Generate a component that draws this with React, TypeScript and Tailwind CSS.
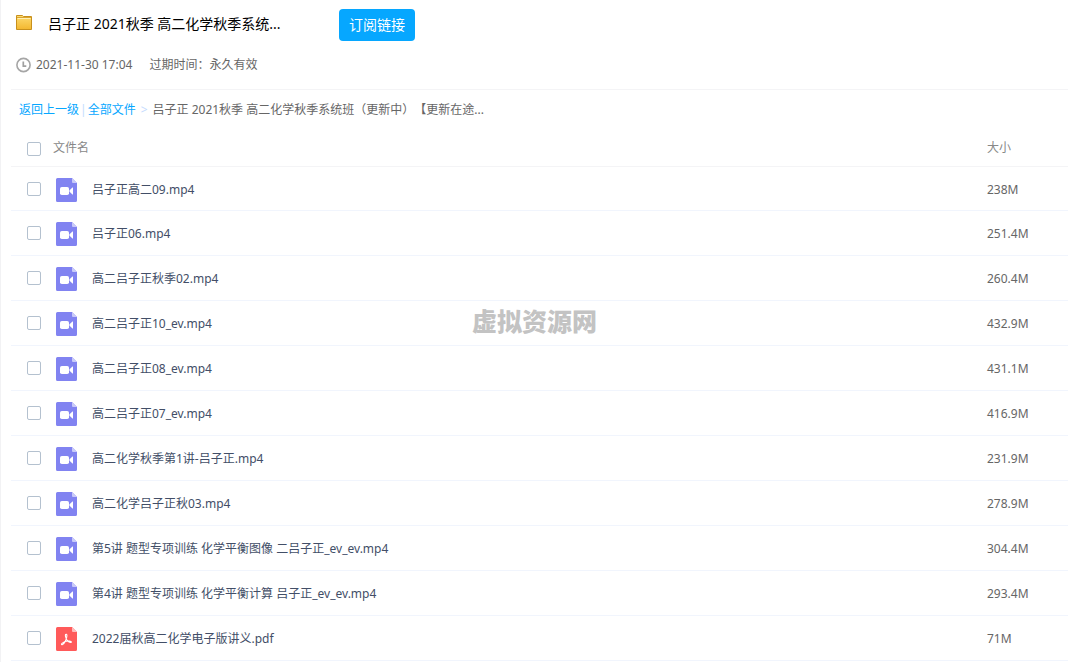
import { useState } from 'react';

type FileKind = 'video' | 'pdf';

interface FileEntry {
  name: string;
  size: string;
  kind: FileKind;
}

const files: FileEntry[] = [
  { name: '吕子正高二09.mp4', size: '238M', kind: 'video' },
  { name: '吕子正06.mp4', size: '251.4M', kind: 'video' },
  { name: '高二吕子正秋季02.mp4', size: '260.4M', kind: 'video' },
  { name: '高二吕子正10_ev.mp4', size: '432.9M', kind: 'video' },
  { name: '高二吕子正08_ev.mp4', size: '431.1M', kind: 'video' },
  { name: '高二吕子正07_ev.mp4', size: '416.9M', kind: 'video' },
  { name: '高二化学秋季第1讲-吕子正.mp4', size: '231.9M', kind: 'video' },
  { name: '高二化学吕子正秋03.mp4', size: '278.9M', kind: 'video' },
  { name: '第5讲 题型专项训练 化学平衡图像 二吕子正_ev_ev.mp4', size: '304.4M', kind: 'video' },
  { name: '第4讲 题型专项训练 化学平衡计算 吕子正_ev_ev.mp4', size: '293.4M', kind: 'video' },
  { name: '2022届秋高二化学电子版讲义.pdf', size: '71M', kind: 'pdf' },
];

function FolderIcon() {
  return (
    <svg width="16" height="15" viewBox="0 0 16 15" aria-hidden="true" className="mb-1 shrink-0">
      <defs>
        <linearGradient id="folder-fill" x1="0" y1="0" x2="0" y2="1">
          <stop offset="0" stopColor="#fddc72" />
          <stop offset="1" stopColor="#f3b72f" />
        </linearGradient>
      </defs>
      <path d="M.5 14.5V.5h6l1 1h8v13z" fill="url(#folder-fill)" stroke="#c8901c" />
      <path d="M1.5 3.5h13" stroke="#fff0b4" />
      <path d="M1 2.5h14" stroke="#dba52e" />
    </svg>
  );
}

function ClockIcon() {
  return (
    <svg width="16" height="16" viewBox="0 0 16 16" fill="none" aria-hidden="true" className="shrink-0">
      <circle cx="7.5" cy="8" r="6.6" stroke="#a6a6a6" strokeWidth="1.6" />
      <path d="M7.3 4.5v4.7h3" stroke="#a0a0a0" strokeWidth="1.7" />
    </svg>
  );
}

function FileIcon({ kind }: { kind: FileKind }) {
  const video = kind === 'video';
  return (
    <svg width="21" height="24" viewBox="0 0 21 24" aria-hidden="true" className="shrink-0">
      <path
        d="M1.5 0H16l5 5v17.5a1.5 1.5 0 0 1-1.5 1.5h-18A1.5 1.5 0 0 1 0 22.5v-21A1.5 1.5 0 0 1 1.5 0z"
        fill={video ? '#8183f1' : '#ff5a5a'}
      />
      <path d="M16 0l5 5h-4a1 1 0 0 1-1-1z" fill={video ? '#c9caf9' : '#ffbcbc'} />
      {video ? (
        <g fill="#fff">
          <rect x="4" y="9" width="9" height="8" rx="1.8" />
          <path d="M13.5 12.2l3-2.7q.5-.4.5.3v6.4q0 .7-.5.3l-3-2.7z" />
        </g>
      ) : (
        <path
          d="M9.6 7.5c1.2-.8 1.6.7 1.1 2.6-.6 2.6-2.5 6.500-4.200 7.500-1 .5-1.500-.4-.5-1.200 1.800-1.600 5-2.500 7.600-2.300 2.300.2 2.200 1.500.9 1.400-2-.2-4.400-2.900-5-6-.2-1-.2-1.700.1-2z"
          fill="none"
          stroke="#fff"
          strokeWidth="1.1"
          strokeLinejoin="round"
        />
      )}
    </svg>
  );
}

interface TickProps {
  label: string;
  checked: boolean;
  onChange: () => void;
}

function Tick({ label, checked, onChange }: TickProps) {
  return (
    <input
      type="checkbox"
      aria-label={label}
      checked={checked}
      onChange={onChange}
      className="block size-[14px] appearance-none rounded-xs border border-[#b4c1cf] bg-white checked:border-[#06a7ff] checked:bg-[#06a7ff]"
    />
  );
}

export default function App() {
  const [selected, setSelected] = useState<string[]>([]);
  const allSelected = selected.length === files.length;

  const toggle = (name: string) =>
    setSelected((current) =>
      current.includes(name) ? current.filter((item) => item !== name) : [...current, name],
    );
  const toggleAll = () => setSelected(allSelected ? [] : files.map((file) => file.name));

  return (
    <main className="relative min-h-screen border-l border-[#f2f2f4] bg-white pl-[10px] font-['Noto_Sans','Noto_Sans_CJK_SC',sans-serif] text-xs text-[#666] [text-spacing-trim:space-all]">
      <header className="border-b border-[#f4f4f6] pt-[9px] pb-4 pl-[5px]">
        <div className="flex items-center">
          <div className="flex w-[323px] items-center gap-4 pb-0.5">
            <FolderIcon />
            <h1 className="text-sm whitespace-nowrap text-black">吕子正 2021秋季 高二化学秋季系统...</h1>
          </div>
          <button type="button" className="h-8 rounded-sm bg-[#06a7ff] px-[10px] text-sm text-white">
            订阅链接
          </button>
        </div>
        <div className="mt-4 flex h-4 items-center leading-4">
          <ClockIcon />
          <time className="ml-1" dateTime="2021-11-30T17:04">
            2021-11-30 17:04
          </time>
          <span className="ml-[17px]">过期时间：永久有效</span>
        </div>
      </header>

      <nav aria-label="文件路径" className="flex h-10 items-center pl-2 whitespace-nowrap">
        <a href="#parent" className="text-[#06a7ff]">
          返回上一级
        </a>
        <span className="mx-px text-[#c4dbfe]">|</span>
        <a href="#all" className="text-[#06a7ff]">
          全部文件
        </a>
        <span className="mx-[5px] text-[#c4dbfe]">&gt;</span>
        <span>吕子正 2021秋季 高二化学秋季系统班（更新中）【更新在途...</span>
      </nav>

      <table className="w-full table-fixed border-separate border-spacing-0 text-left">
        <colgroup>
          <col className="w-[42px]" />
          <col />
          <col className="w-[81px]" />
        </colgroup>
        <thead>
          <tr className="text-[#888]">
            <th className="h-[37px] border-b border-[#f4f4f6] pt-0.5 pl-4">
              <Tick label="全选" checked={allSelected} onChange={toggleAll} />
            </th>
            <th className="border-b border-[#f4f4f6] font-normal">文件名</th>
            <th className="border-b border-[#f4f4f6] font-normal">大小</th>
          </tr>
        </thead>
        <tbody>
          {files.map((file) => (
            <tr key={file.name} className="h-[45px] first:h-11">
              <td className="border-b border-[#f1f5fd] pl-4">
                <Tick
                  label={file.name}
                  checked={selected.includes(file.name)}
                  onChange={() => toggle(file.name)}
                />
              </td>
              <td className="border-b border-[#f1f5fd] pt-0.5 pl-[3px]">
                <div className="flex items-center gap-[15px] text-[#424e67]">
                  <FileIcon kind={file.kind} />
                  <span>{file.name}</span>
                </div>
              </td>
              <td className="border-b border-[#f1f5fd] pt-0.5">{file.size}</td>
            </tr>
          ))}
        </tbody>
      </table>

      <div className="pointer-events-none absolute inset-x-0 top-[303px] text-center text-[25px] leading-9 font-black text-[#c3c3c3]">
        虚拟资源网
      </div>
    </main>
  );
}
